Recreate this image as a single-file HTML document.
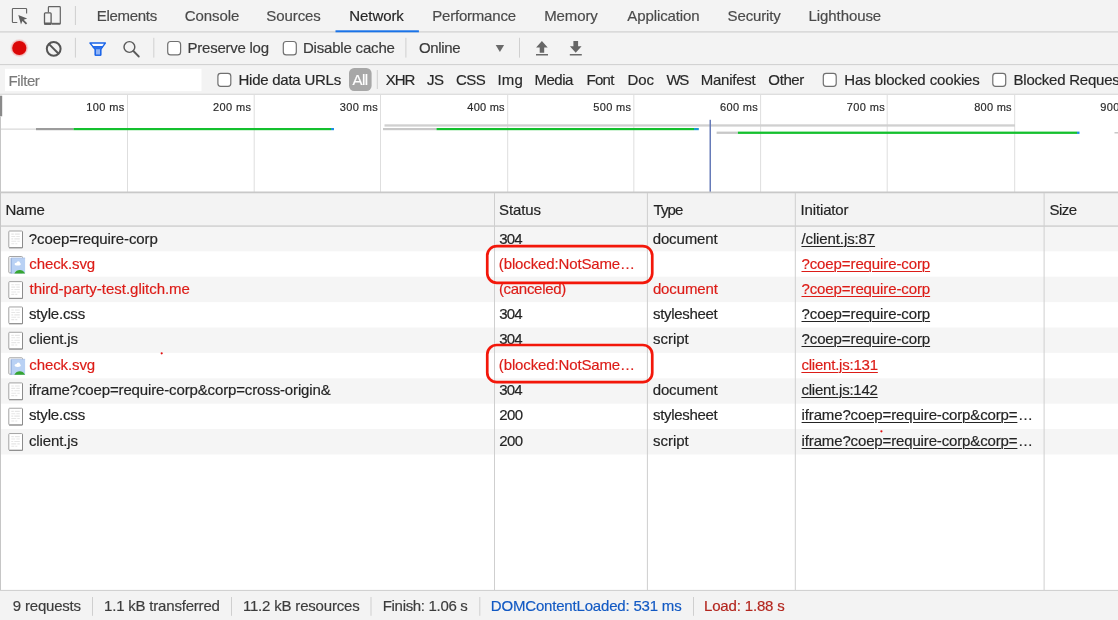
<!DOCTYPE html>
<html>
<head>
<meta charset="utf-8">
<style>
html,body{margin:0;padding:0;}
body{width:1118px;height:620px;overflow:hidden;position:relative;background:#fff;font-family:"Liberation Sans",sans-serif;color:#303030;}
svg{position:absolute;left:0;top:0;}
.t{position:absolute;white-space:nowrap;line-height:1;font-size:15px;color:#2f2f2f;-webkit-text-stroke:0.18px currentColor;}
.tab{color:#4a4a4a;}
.tab.sel{color:#262626;}
.tb{color:#3a3a3a;}
.f{color:#282828;}
.rl{font-size:11px;color:#2a2a2a;}
.c{color:#242424;}
.red{color:#dc1c17;}
.u{text-decoration:underline;text-decoration-thickness:1px;text-underline-offset:2px;}
.s{color:#3c3c3c;}
</style>
</head>
<body>
<svg width="1118" height="620" viewBox="0 0 1118 620">
<!-- bars -->
<rect x="0" y="0" width="1118" height="94" fill="#f3f3f3"/>
<rect x="0" y="31.350" width="1118" height="1.100" fill="#cdcdcd"/>
<rect x="0" y="64.100" width="1118" height="1" fill="#cfcfcf"/>
<rect x="0" y="93.800" width="1118" height="1" fill="#cdcdcd"/>
<!-- selected tab underline -->
<rect x="335.500" y="30.300" width="83.400" height="2" fill="#1a73e8"/>
<!-- inspect icon -->
<path d="M17.300 22.500H13.200a0.800 0.800 0 0 1-0.800-0.800V9.300a0.800 0.800 0 0 1 0.800-0.800h12.600a0.800 0.800 0 0 1 0.800 0.800V13.400" fill="none" stroke="#666" stroke-width="1.150"/>
<path d="M18.300 14.900l8.900 3.500-3.500 1.400 3.500 3.500-1.300 1.300-3.500-3.500-1.400 3.500z" fill="#5e5e5e"/>
<!-- device icon -->
<path d="M48.400 12.200V7.400a0.800 0.800 0 0 1 0.800-0.800h10.300a0.800 0.800 0 0 1 0.800 0.800v15.800a0.800 0.800 0 0 1-0.800 0.800H52" fill="none" stroke="#646464" stroke-width="1.200"/>
<rect x="52" y="22.800" width="8.300" height="1.700" fill="#646464"/>
<rect x="44.500" y="12.900" width="6.600" height="11.300" rx="0.900" fill="#f3f3f3" stroke="#5e5e5e" stroke-width="1.300"/>
<rect x="44" y="22.400" width="7.700" height="2.400" rx="0.800" fill="#5e5e5e"/>
<!-- separators tabs -->
<rect x="74.900" y="6" width="1" height="19" fill="#cfcfcf"/>
<!-- toolbar icons -->
<circle cx="19.300" cy="48" r="9" fill="#f04040" opacity="0.13"/>
<circle cx="19.300" cy="48" r="8.100" fill="#f04040" opacity="0.22"/>
<circle cx="19.300" cy="48" r="7.100" fill="#db0606"/>
<circle cx="53.700" cy="48.800" r="6.900" fill="none" stroke="#555" stroke-width="2"/>
<path d="M48.800 43.900L58.600 53.700" stroke="#555" stroke-width="2"/>
<rect x="74.900" y="37.800" width="1" height="19.800" fill="#d0d0d0"/>
<!-- filter icon -->
<path d="M89.900 43H105.400L100.700 49.300V55.100H95.300V49.300z" fill="#fbfcff" stroke="#1a64e8" stroke-width="1.300" stroke-linejoin="round"/>
<path d="M92.900 46.700H102.400L100.700 49.300V55.100H95.300V49.300z" fill="#8fb3f6" stroke="#1a64e8" stroke-width="1.300" stroke-linejoin="round"/>
<path d="M93 46.600H102.300L100.300 49.300H95.700z" fill="#2a6fea"/>
<!-- search icon -->
<circle cx="129.400" cy="47" r="5.400" fill="none" stroke="#5a5a5a" stroke-width="1.450"/>
<path d="M133.400 51L138.800 56.500" stroke="#5a5a5a" stroke-width="1.800" stroke-linecap="round"/>
<rect x="153.300" y="37.800" width="1" height="19.800" fill="#d0d0d0"/>
<!-- checkboxes toolbar -->
<rect x="167.700" y="41.500" width="12.900" height="13.400" rx="2.900" fill="#fff" stroke="#707070" stroke-width="1.200"/>
<rect x="283.300" y="41.500" width="13" height="13.400" rx="2.900" fill="#fff" stroke="#707070" stroke-width="1.200"/>
<rect x="405.400" y="37.800" width="1" height="19.800" fill="#d0d0d0"/>
<path d="M495.700 45.100h8.400l-4.200 6.800z" fill="#6a6a6a"/>
<rect x="519" y="37.800" width="1" height="19.800" fill="#d0d0d0"/>
<!-- upload/download -->
<path d="M541.900 41.100L547.700 47.600H544.200V52.700H539.700V47.600H536.100z" fill="#666"/>
<rect x="536" y="54" width="12" height="1.500" fill="#6a6a6a"/>
<path d="M575.700 52.800L581.600 46.300H578.100V41.100H573.400V46.300H569.900z" fill="#666"/>
<rect x="569.800" y="54" width="12" height="1.500" fill="#6a6a6a"/>
<!-- filter bar -->
<rect x="5" y="68.800" width="196.500" height="22.300" fill="#fff"/>
<rect x="217.900" y="73.400" width="12.900" height="12.900" rx="2.800" fill="#fff" stroke="#707070" stroke-width="1.200"/>
<rect x="349" y="67.900" width="22.600" height="23.100" rx="5.200" fill="#a7a7a7"/>
<rect x="376.800" y="70" width="1" height="19" fill="#cfcfcf"/>
<rect x="823.300" y="73.400" width="12.900" height="12.900" rx="2.800" fill="#fff" stroke="#707070" stroke-width="1.200"/>
<rect x="992.800" y="73.400" width="12.900" height="12.900" rx="2.800" fill="#fff" stroke="#707070" stroke-width="1.200"/>

<!-- overview -->
<rect x="0" y="94.800" width="1118" height="97.200" fill="#fff"/>
<g stroke="#dedede" stroke-width="1">
<path d="M127.50 95V192M254.20 95V192M380.50 95V192M507.70 95V192M633.85 95V192M760.60 95V192M887.20 95V192M1014.70 95V192"/>
</g>
<rect x="0" y="95.700" width="2.200" height="20.600" fill="#8a8a8a"/>
<rect x="0" y="116.300" width="1" height="76" fill="#c6c6c6"/>
<!-- timeline bars -->
<rect x="1" y="128.600" width="35" height="1" fill="#cfcfcf"/>
<rect x="36" y="128" width="37.500" height="2.200" fill="#9c9c9c"/>
<rect x="73.500" y="128" width="257.500" height="2.200" fill="#14c02e"/>
<rect x="331" y="128" width="3" height="2.200" fill="#1e8fe0"/>
<rect x="384.500" y="124.300" width="630.500" height="2.300" fill="#d0d0d0"/>
<rect x="383" y="128" width="53.500" height="2.200" fill="#c8c8c8"/>
<rect x="436.500" y="128" width="257.500" height="2.200" fill="#14c02e"/>
<rect x="694" y="128" width="4.800" height="2.200" fill="#1e9ad0"/>
<rect x="716.600" y="131.600" width="21.300" height="2.300" fill="#c8c8c8"/>
<rect x="737.900" y="131.600" width="339.100" height="2.300" fill="#14c02e"/>
<rect x="1077" y="131.600" width="2.500" height="2.300" fill="#1e8fe0"/>
<rect x="1114.500" y="132" width="3.500" height="1.500" fill="#c8c8c8"/>
<rect x="709.500" y="119.800" width="1.500" height="72.200" fill="#667bb8"/>

<!-- table header -->
<rect x="0" y="193.200" width="1118" height="32.800" fill="#f3f3f3"/>
<rect x="0" y="191.500" width="1118" height="1.800" fill="#c8c8c8"/>
<!-- row backgrounds -->
<rect x="0" y="225.95" width="1118" height="25.39" fill="#f5f5f5"/>
<rect x="0" y="276.73" width="1118" height="25.39" fill="#f5f5f5"/>
<rect x="0" y="327.51" width="1118" height="25.39" fill="#f5f5f5"/>
<rect x="0" y="378.29" width="1118" height="25.39" fill="#f5f5f5"/>
<rect x="0" y="429.07" width="1118" height="25.39" fill="#f5f5f5"/>
<rect x="0" y="225.450" width="1118" height="1.250" fill="#c9c9c9"/>
<!-- column lines -->
<g fill="#cfcfcf">
<rect x="0" y="193" width="1" height="397" fill="#c6c6c6"/>
<rect x="494" y="193" width="1" height="397"/>
<rect x="646.900" y="193" width="1" height="397"/>
<rect x="794.800" y="193" width="1" height="397"/>
<rect x="1043.600" y="193" width="1" height="397"/>
</g>
<!-- icons -->
<g transform="translate(8.3 230.50)"><rect x="0.5" y="0.5" width="13.7" height="16.7" rx="0.8" fill="#fff" stroke="#a3a3a3" stroke-width="1"/>
    <path d="M14.2 1.2V17.3H0.8" fill="none" stroke="#8c8c8c" stroke-width="1"/>
    <path d="M3 3.600h2.500M6.500 3.600h5M3 6h4M8 6h3.500M3 8.400h2M6 8.400h5.500M3 10.800h5M9 10.800h2.500M3 13.200h3M7 13.200h2" stroke="#e6e6e6" stroke-width="1.1"/></g>
<g transform="translate(8.3 256.02)"><rect x="0.5" y="0.500" width="13.700" height="16.300" rx="0.800" fill="#fff" stroke="#a3a3a3" stroke-width="1"/>
    <rect x="2.800" y="2" width="14" height="15.500" fill="#b9d1f4"/>
    <path d="M2.800 2v15.500" stroke="#7d9bd0" stroke-width="0.9"/>
    <path d="M2.800 2h14" stroke="#a9c0e6" stroke-width="0.8"/>
    <ellipse cx="9.400" cy="8" rx="3.100" ry="1.600" fill="#fff"/>
    <circle cx="10" cy="6.900" r="1.700" fill="#fff"/>
    <path d="M6 17.500c1.200-2.600 3.400-3.600 5.500-3.600s4 1 5.300 3.600z" fill="#35a531"/></g>
<g transform="translate(8.3 281.14)"><rect x="0.5" y="0.5" width="13.7" height="16.7" rx="0.8" fill="#fff" stroke="#a3a3a3" stroke-width="1"/>
    <path d="M14.2 1.2V17.3H0.8" fill="none" stroke="#8c8c8c" stroke-width="1"/>
    <path d="M3 3.600h2.500M6.500 3.600h5M3 6h4M8 6h3.500M3 8.400h2M6 8.400h5.500M3 10.800h5M9 10.800h2.500M3 13.200h3M7 13.200h2" stroke="#e6e6e6" stroke-width="1.1"/></g>
<g transform="translate(8.3 306.46)"><rect x="0.5" y="0.5" width="13.7" height="16.7" rx="0.8" fill="#fff" stroke="#a3a3a3" stroke-width="1"/>
    <path d="M14.2 1.2V17.3H0.8" fill="none" stroke="#8c8c8c" stroke-width="1"/>
    <path d="M3 3.600h2.500M6.500 3.600h5M3 6h4M8 6h3.500M3 8.400h2M6 8.400h5.500M3 10.800h5M9 10.800h2.500M3 13.200h3M7 13.200h2" stroke="#e6e6e6" stroke-width="1.1"/></g>
<g transform="translate(8.3 331.78)"><rect x="0.5" y="0.5" width="13.7" height="16.7" rx="0.8" fill="#fff" stroke="#a3a3a3" stroke-width="1"/>
    <path d="M14.2 1.2V17.3H0.8" fill="none" stroke="#8c8c8c" stroke-width="1"/>
    <path d="M3 3.600h2.500M6.500 3.600h5M3 6h4M8 6h3.500M3 8.400h2M6 8.400h5.500M3 10.800h5M9 10.800h2.500M3 13.200h3M7 13.200h2" stroke="#e6e6e6" stroke-width="1.1"/></g>
<g transform="translate(8.3 357.30)"><rect x="0.5" y="0.500" width="13.700" height="16.300" rx="0.800" fill="#fff" stroke="#a3a3a3" stroke-width="1"/>
    <rect x="2.800" y="2" width="14" height="15.500" fill="#b9d1f4"/>
    <path d="M2.800 2v15.500" stroke="#7d9bd0" stroke-width="0.9"/>
    <path d="M2.800 2h14" stroke="#a9c0e6" stroke-width="0.8"/>
    <ellipse cx="9.400" cy="8" rx="3.100" ry="1.600" fill="#fff"/>
    <circle cx="10" cy="6.900" r="1.700" fill="#fff"/>
    <path d="M6 17.500c1.200-2.600 3.400-3.600 5.500-3.600s4 1 5.300 3.600z" fill="#35a531"/></g>
<g transform="translate(8.3 382.42)"><rect x="0.5" y="0.5" width="13.7" height="16.7" rx="0.8" fill="#fff" stroke="#a3a3a3" stroke-width="1"/>
    <path d="M14.2 1.2V17.3H0.8" fill="none" stroke="#8c8c8c" stroke-width="1"/>
    <path d="M3 3.600h2.500M6.500 3.600h5M3 6h4M8 6h3.500M3 8.400h2M6 8.400h5.500M3 10.800h5M9 10.800h2.500M3 13.200h3M7 13.200h2" stroke="#e6e6e6" stroke-width="1.1"/></g>
<g transform="translate(8.3 407.74)"><rect x="0.5" y="0.5" width="13.7" height="16.7" rx="0.8" fill="#fff" stroke="#a3a3a3" stroke-width="1"/>
    <path d="M14.2 1.2V17.3H0.8" fill="none" stroke="#8c8c8c" stroke-width="1"/>
    <path d="M3 3.600h2.500M6.500 3.600h5M3 6h4M8 6h3.500M3 8.400h2M6 8.400h5.500M3 10.800h5M9 10.800h2.500M3 13.200h3M7 13.200h2" stroke="#e6e6e6" stroke-width="1.1"/></g>
<g transform="translate(8.3 433.06)"><rect x="0.5" y="0.5" width="13.7" height="16.7" rx="0.8" fill="#fff" stroke="#a3a3a3" stroke-width="1"/>
    <path d="M14.2 1.2V17.3H0.8" fill="none" stroke="#8c8c8c" stroke-width="1"/>
    <path d="M3 3.600h2.500M6.500 3.600h5M3 6h4M8 6h3.500M3 8.400h2M6 8.400h5.500M3 10.800h5M9 10.800h2.500M3 13.200h3M7 13.200h2" stroke="#e6e6e6" stroke-width="1.1"/></g>
<!-- status bar -->
<rect x="0" y="590.800" width="1118" height="29.200" fill="#f3f3f3"/>
<rect x="0" y="589.900" width="1118" height="1" fill="#cdcdcd"/>
<g fill="#cfcfcf">
<rect x="92" y="597" width="1" height="18.800"/>
<rect x="231" y="597" width="1" height="18.800"/>
<rect x="370.500" y="597" width="1" height="18.800"/>
<rect x="479.300" y="597" width="1" height="18.800"/>
<rect x="693" y="597" width="1" height="18.800"/>
</g>
<!-- stray red dots present in the source image -->
<circle cx="161.700" cy="353.300" r="1.100" fill="#e01010"/>
<circle cx="881.400" cy="431.300" r="1.100" fill="#e01010"/>
</svg>
<div id="txt" style="position:absolute;left:0;top:0;width:1118px;height:620px;will-change:transform;">
<span id="tab0" class="t tab" style="left:96.74px;top:8px;letter-spacing:-0.291px;">Elements</span>
<span id="tab1" class="t tab" style="left:184.77px;top:8px;letter-spacing:-0.089px;">Console</span>
<span id="tab2" class="t tab" style="left:266.33px;top:8px;letter-spacing:-0.095px;">Sources</span>
<span id="tab3" class="t tab sel" style="left:349.28px;top:8px;letter-spacing:-0.074px;">Network</span>
<span id="tab4" class="t tab" style="left:432.21px;top:8px;letter-spacing:-0.203px;">Performance</span>
<span id="tab5" class="t tab" style="left:544.21px;top:8px;letter-spacing:-0.107px;">Memory</span>
<span id="tab6" class="t tab" style="left:627.29px;top:8px;letter-spacing:-0.100px;">Application</span>
<span id="tab7" class="t tab" style="left:727.61px;top:8px;letter-spacing:-0.155px;">Security</span>
<span id="tab8" class="t tab" style="left:808.58px;top:8px;letter-spacing:-0.090px;">Lighthouse</span>
<span id="pres" class="t tb" style="left:187.61px;top:40px;letter-spacing:-0.257px;">Preserve log</span>
<span id="dis" class="t tb" style="left:302.89px;top:40px;letter-spacing:-0.184px;">Disable cache</span>
<span id="onl" class="t tb" style="left:418.95px;top:40px;letter-spacing:-0.355px;">Online</span>
<span id="filt" class="t f" style="left:8.53px;top:73px;letter-spacing:-0.400px;color:#7a7a7a;">Filter</span>
<span id="hide" class="t f" style="left:238.50px;top:72px;letter-spacing:-0.250px;">Hide data URLs</span>
<span id="all" class="t f" style="left:352.60px;top:72px;letter-spacing:-0.600px;color:#fff;">All</span>
<span id="ft0" class="t f" style="left:385.69px;top:72px;letter-spacing:-0.989px;">XHR</span>
<span id="ft1" class="t f" style="left:427.12px;top:72px;letter-spacing:-0.501px;">JS</span>
<span id="ft2" class="t f" style="left:455.95px;top:72px;letter-spacing:-0.466px;">CSS</span>
<span id="ft3" class="t f" style="left:497.41px;top:72px;letter-spacing:0.214px;">Img</span>
<span id="ft4" class="t f" style="left:534.41px;top:72px;letter-spacing:-0.475px;">Media</span>
<span id="ft5" class="t f" style="left:586.49px;top:72px;letter-spacing:-0.709px;">Font</span>
<span id="ft6" class="t f" style="left:627.50px;top:72px;letter-spacing:-0.056px;">Doc</span>
<span id="ft7" class="t f" style="left:666.47px;top:72px;letter-spacing:-1.300px;">WS</span>
<span id="ft8" class="t f" style="left:700.80px;top:72px;letter-spacing:-0.267px;">Manifest</span>
<span id="ft9" class="t f" style="left:768.36px;top:72px;letter-spacing:-0.389px;">Other</span>
<span id="hbc" class="t f" style="left:844.29px;top:72px;letter-spacing:-0.111px;">Has blocked cookies</span>
<span id="breq" class="t f" style="left:1013.59px;top:72px;letter-spacing:-0.231px;">Blocked Requests</span>
<span id="rl0" class="t rl" style="left:86.23px;top:102px;letter-spacing:0.395px;">100 ms</span>
<span id="rl1" class="t rl" style="left:213.07px;top:102px;letter-spacing:0.374px;">200 ms</span>
<span id="rl2" class="t rl" style="left:339.87px;top:102px;letter-spacing:0.379px;">300 ms</span>
<span id="rl3" class="t rl" style="left:467.27px;top:102px;letter-spacing:0.242px;">400 ms</span>
<span id="rl4" class="t rl" style="left:593.34px;top:102px;letter-spacing:0.312px;">500 ms</span>
<span id="rl5" class="t rl" style="left:720.05px;top:102px;letter-spacing:0.305px;">600 ms</span>
<span id="rl6" class="t rl" style="left:846.87px;top:102px;letter-spacing:0.368px;">700 ms</span>
<span id="rl7" class="t rl" style="left:974.14px;top:102px;letter-spacing:0.274px;">800 ms</span>
<span id="rl8" class="t rl" style="left:1100.13px;top:102px;letter-spacing:0.395px;">900 ms</span>
<span id="hname" class="t c" style="left:5.54px;top:202px;letter-spacing:-0.247px;">Name</span>
<span id="hstat" class="t c" style="left:499.06px;top:202px;letter-spacing:-0.136px;">Status</span>
<span id="htype" class="t c" style="left:653.42px;top:202px;letter-spacing:-0.859px;">Type</span>
<span id="hinit" class="t c" style="left:800.51px;top:202px;letter-spacing:-0.141px;">Initiator</span>
<span id="hsize" class="t c" style="left:1049.52px;top:202px;letter-spacing:-0.515px;">Size</span>
<span id="n0" class="t c" style="left:28.81px;top:231px;letter-spacing:-0.087px;">?coep=require-corp</span>
<span id="s0" class="t c" style="left:499.19px;top:231px;letter-spacing:-0.764px;">304</span>
<span id="t0" class="t c" style="left:652.68px;top:231px;letter-spacing:-0.138px;">document</span>
<span id="i0" class="t c u" style="left:801.43px;top:231px;letter-spacing:-0.106px;">/client.js:87</span>
<span id="n1" class="t c red" style="left:29.36px;top:256px;letter-spacing:-0.106px;">check.svg</span>
<span id="s1" class="t c red" style="left:498.85px;top:256px;letter-spacing:-0.135px;">(blocked:NotSame…</span>
<span id="i1" class="t c u red" style="left:801.49px;top:256px;letter-spacing:-0.104px;">?coep=require-corp</span>
<span id="n2" class="t c red" style="left:29.49px;top:281px;letter-spacing:-0.017px;">third-party-test.glitch.me</span>
<span id="s2" class="t c red" style="left:498.89px;top:281px;letter-spacing:-0.290px;">(canceled)</span>
<span id="t2" class="t c red" style="left:652.88px;top:281px;letter-spacing:-0.111px;">document</span>
<span id="i2" class="t c u red" style="left:801.49px;top:281px;letter-spacing:-0.104px;">?coep=require-corp</span>
<span id="n3" class="t c" style="left:29.01px;top:306px;letter-spacing:-0.171px;">style.css</span>
<span id="s3" class="t c" style="left:499.18px;top:306px;letter-spacing:-0.757px;">304</span>
<span id="t3" class="t c" style="left:653.04px;top:306px;letter-spacing:-0.311px;">stylesheet</span>
<span id="i3" class="t c u" style="left:801.50px;top:306px;letter-spacing:-0.105px;">?coep=require-corp</span>
<span id="n4" class="t c" style="left:28.97px;top:331px;letter-spacing:-0.136px;">client.js</span>
<span id="s4" class="t c" style="left:499.19px;top:331px;letter-spacing:-0.764px;">304</span>
<span id="t4" class="t c" style="left:653.04px;top:331px;letter-spacing:-0.033px;">script</span>
<span id="i4" class="t c u" style="left:801.50px;top:331px;letter-spacing:-0.106px;">?coep=require-corp</span>
<span id="n5" class="t c red" style="left:29.36px;top:357px;letter-spacing:-0.106px;">check.svg</span>
<span id="s5" class="t c red" style="left:498.85px;top:357px;letter-spacing:-0.135px;">(blocked:NotSame…</span>
<span id="i5" class="t c u red" style="left:801.40px;top:357px;letter-spacing:-0.213px;">client.js:131</span>
<span id="n6" class="t c" style="left:28.92px;top:382px;letter-spacing:-0.139px;">iframe?coep=require-corp&amp;corp=cross-origin&amp;</span>
<span id="s6" class="t c" style="left:499.19px;top:382px;letter-spacing:-0.764px;">304</span>
<span id="t6" class="t c" style="left:652.68px;top:382px;letter-spacing:-0.138px;">document</span>
<span id="i6" class="t c u" style="left:801.40px;top:382px;letter-spacing:-0.221px;">client.js:142</span>
<span id="n7" class="t c" style="left:29.01px;top:407px;letter-spacing:-0.171px;">style.css</span>
<span id="s7" class="t c" style="left:499.25px;top:407px;letter-spacing:-0.633px;">200</span>
<span id="t7" class="t c" style="left:653.04px;top:407px;letter-spacing:-0.311px;">stylesheet</span>
<span id="i7" class="t c u" style="left:801.60px;top:407px;letter-spacing:-0.144px;">iframe?coep=require-corp&amp;corp=</span>
<span id="i7e" class="t c" style="left:1018.1px;top:407px;">…</span>
<span id="n8" class="t c" style="left:28.97px;top:433px;letter-spacing:-0.136px;">client.js</span>
<span id="s8" class="t c" style="left:499.25px;top:433px;letter-spacing:-0.635px;">200</span>
<span id="t8" class="t c" style="left:653.04px;top:433px;letter-spacing:-0.033px;">script</span>
<span id="i8" class="t c u" style="left:801.60px;top:433px;letter-spacing:-0.144px;">iframe?coep=require-corp&amp;corp=</span>
<span id="i8e" class="t c" style="left:1018.1px;top:433px;">…</span>
<span id="sb0" class="t s" style="left:12.85px;top:598px;letter-spacing:-0.203px;">9 requests</span>
<span id="sb1" class="t s" style="left:104.06px;top:598px;letter-spacing:-0.200px;">1.1 kB transferred</span>
<span id="sb2" class="t s" style="left:242.89px;top:598px;letter-spacing:-0.184px;">11.2 kB resources</span>
<span id="sb3" class="t s" style="left:382.76px;top:598px;letter-spacing:-0.315px;">Finish: 1.06 s</span>
<span id="sb4" class="t s" style="left:490.84px;top:598px;letter-spacing:-0.186px;color:#1259c3;">DOMContentLoaded: 531 ms</span>
<span id="sb5" class="t s" style="left:704.01px;top:598px;letter-spacing:-0.163px;color:#b3261e;">Load: 1.88 s</span>
</div>
<svg id="callouts" width="1118" height="620" viewBox="0 0 1118 620">
<rect x="487.250" y="246.100" width="165" height="36.700" rx="9.500" fill="none" stroke="#f3170a" stroke-width="2.700"/>
<rect x="487.250" y="345" width="165" height="37.200" rx="9.500" fill="none" stroke="#f3170a" stroke-width="2.700"/>
</svg>
</body>
</html>
